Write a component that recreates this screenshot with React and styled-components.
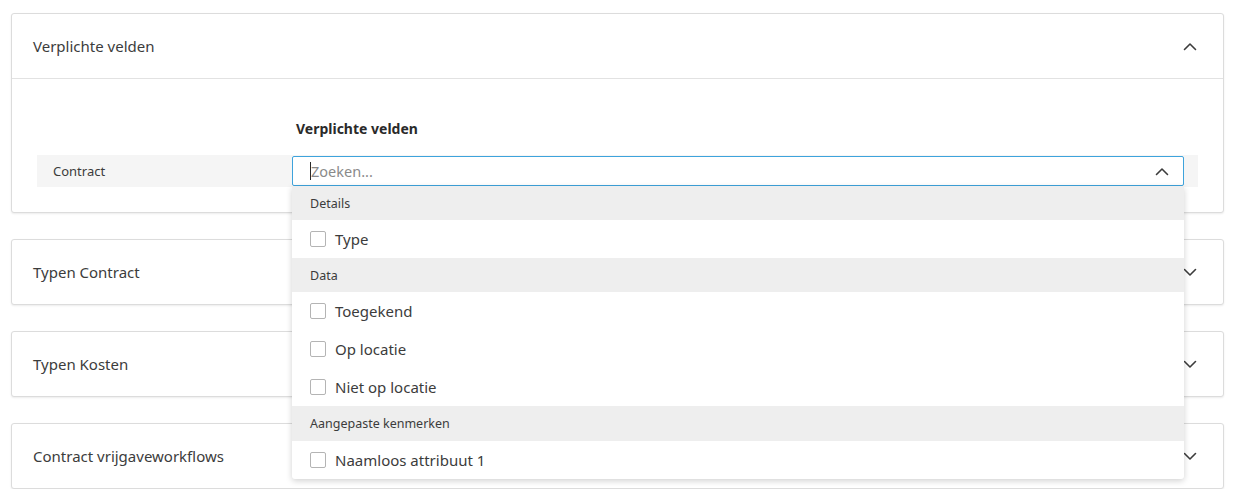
import React from "react";
import styled, { createGlobalStyle } from "styled-components";

const Global = createGlobalStyle`
  html, body { margin: 0; padding: 0; background: #ffffff; }
  body { font-family: "Noto Sans", "Open Sans", sans-serif; color: #3c3c3c; }
  * { box-sizing: border-box; }
`;

const Page = styled.div`
  padding: 13px 14px 0 11px;
  display: flex;
  flex-direction: column;
  gap: 26px;
`;

const Card = styled.section`
  background: #fff;
  border: 1px solid #dcdcdc;
  border-radius: 3px;
  box-shadow: 0 1px 2px rgba(0, 0, 0, 0.08);
`;

const CardHeader = styled.div`
  height: ${(p) => (p.$open ? 65 : 64)}px;
  display: flex;
  align-items: center;
  justify-content: space-between;
  padding: 0 26px 0 21px;
  font-size: 15px;
  color: #3c3c3c;
  border-bottom: ${(p) => (p.$open ? "1px solid #e2e2e2" : "none")};
`;

const CardBody = styled.div`
  padding: 40px 25px 25px 25px;
`;

const FieldHeading = styled.div`
  margin-left: 259px;
  font-size: 14px;
  font-weight: 700;
  color: #2a2a2a;
  height: 20px;
  line-height: 20px;
  margin-bottom: 16px;
`;

const FieldRow = styled.div`
  background: #f5f5f5;
  height: 32px;
  display: grid;
  grid-template-columns: 255px 1fr;
  align-items: center;
  padding-right: 14px;
`;

const RowLabel = styled.div`
  padding-left: 16px;
  font-size: 13px;
  color: #3c3c3c;
`;

const SelectWrap = styled.div`
  position: relative;
  height: 30px;
`;

const SearchBox = styled.div`
  height: 30px;
  border: 1px solid #3ea3dc;
  border-radius: 2px;
  background: #fff;
  display: flex;
  align-items: center;
  padding: 0 14px 0 17px;
  justify-content: space-between;
`;

const Placeholder = styled.span`
  font-size: 14.5px;
  color: #8a8a8a;
  border-left: 1.5px solid #2a2a2a;
  line-height: 18px;
`;

const Menu = styled.div`
  position: absolute;
  left: 0;
  right: 0;
  top: 30px;
  background: #fff;
  border-radius: 0 0 3px 3px;
  box-shadow: 0 2px 6px rgba(0, 0, 0, 0.18);
  z-index: 10;
  overflow: hidden;
`;

const GroupHeader = styled.div`
  height: ${(p) => p.$h || 34}px;
  background: #eeeeee;
  display: flex;
  align-items: center;
  padding-left: 18px;
  font-size: 12.5px;
  color: #3c3c3c;
`;

const Option = styled.label`
  height: 38px;
  display: flex;
  align-items: center;
  gap: 9px;
  padding-left: 18px;
  font-size: 15px;
  color: #3c3c3c;
`;

const Box = styled.span`
  width: 16px;
  height: 16px;
  border: 1px solid #b4b4b4;
  border-radius: 2px;
  background: #fff;
`;

const Chevron = ({ up }) => (
  <svg width="14" height="9" viewBox="0 0 14 9" fill="none">
    <path
      d={up ? "M1.5 7.5 L7 2 L12.5 7.5" : "M1.5 1.5 L7 7 L12.5 1.5"}
      stroke="#3c3c3c"
      strokeWidth="1.6"
      strokeLinecap="round"
      strokeLinejoin="round"
    />
  </svg>
);

const menu = [
  { group: "Details", items: ["Type"] },
  { group: "Data", items: ["Toegekend", "Op locatie", "Niet op locatie"] },
  { group: "Aangepaste kenmerken", items: ["Naamloos attribuut 1"], h: 35 },
];

export default function App() {
  return (
    <>
      <Global />
      <Page>
        <Card>
          <CardHeader $open>
            <span>Verplichte velden</span>
            <Chevron up />
          </CardHeader>
          <CardBody>
            <FieldHeading>Verplichte velden</FieldHeading>
            <FieldRow>
              <RowLabel>Contract</RowLabel>
              <SelectWrap>
                <SearchBox>
                  <Placeholder>Zoeken...</Placeholder>
                  <Chevron up />
                </SearchBox>
                <Menu>
                  {menu.map((g) => (
                    <React.Fragment key={g.group}>
                      <GroupHeader $h={g.h}>{g.group}</GroupHeader>
                      {g.items.map((it) => (
                        <Option key={it}>
                          <Box />
                          {it}
                        </Option>
                      ))}
                    </React.Fragment>
                  ))}
                </Menu>
              </SelectWrap>
            </FieldRow>
          </CardBody>
        </Card>
        {["Typen Contract", "Typen Kosten", "Contract vrijgaveworkflows"].map((t) => (
          <Card key={t}>
            <CardHeader>
              <span>{t}</span>
              <Chevron />
            </CardHeader>
          </Card>
        ))}
      </Page>
    </>
  );
}
